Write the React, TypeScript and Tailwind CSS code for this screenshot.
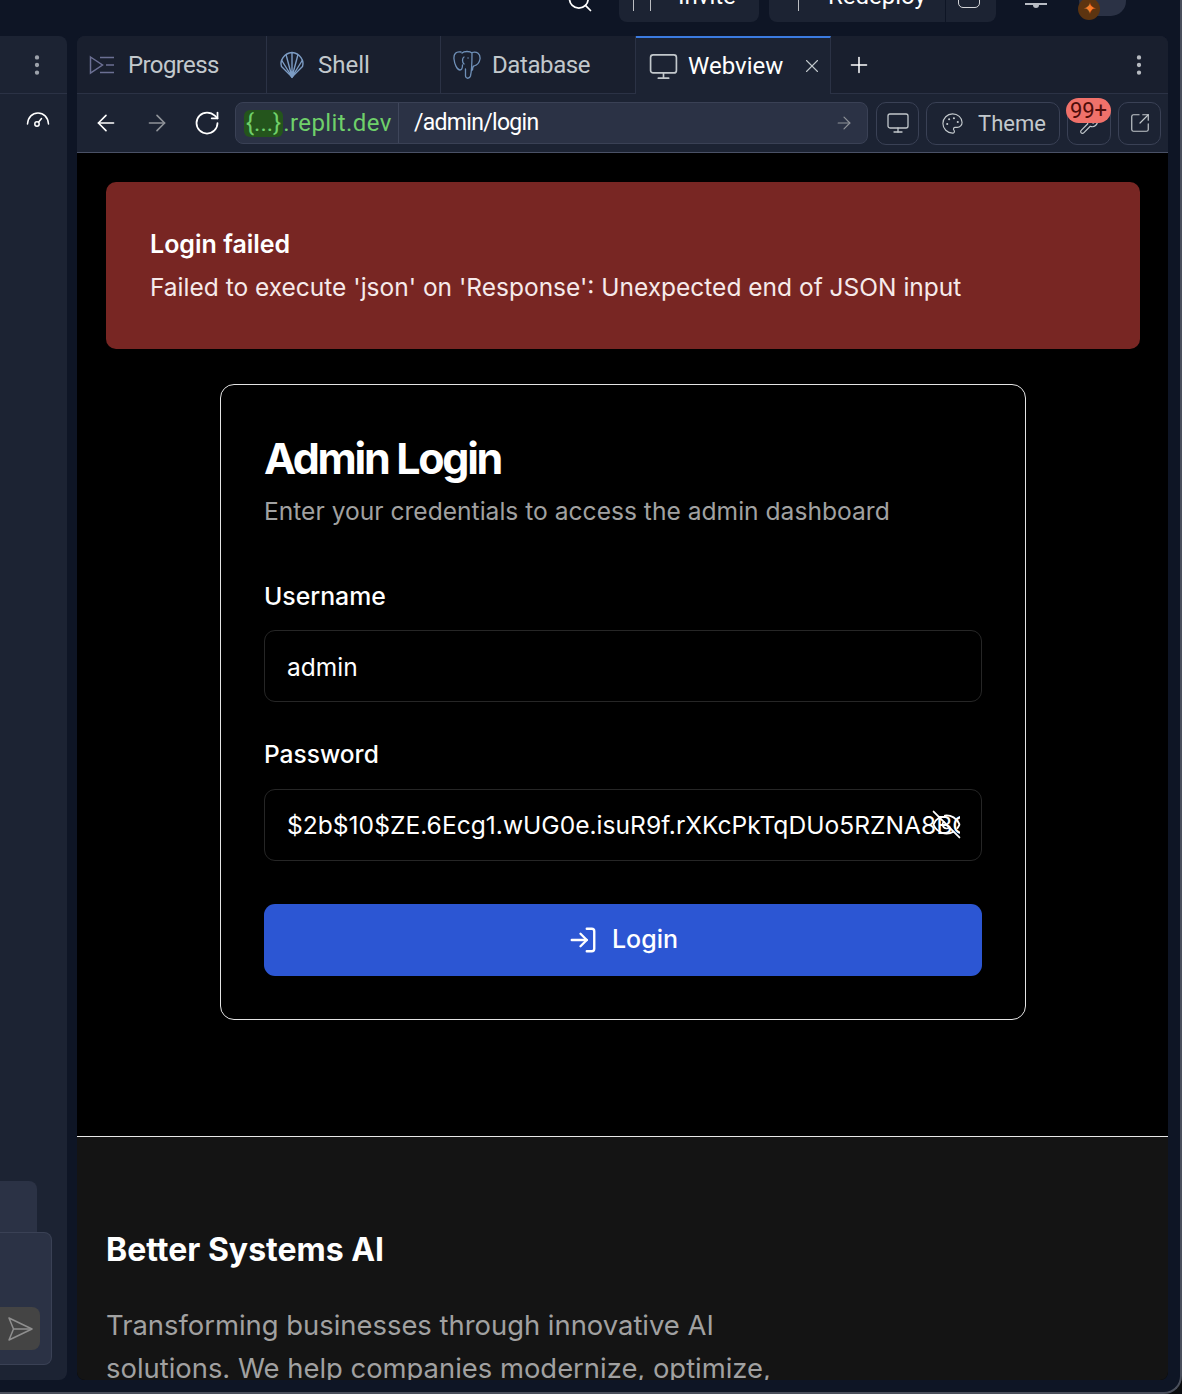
import { ArrowLeft, ArrowRight, EllipsisVertical, EyeOff, LogIn, Monitor, Palette, Plus, RotateCw, Search, SquareArrowOutUpRight, Wrench, X } from 'lucide-react'

const plex = "font-['Roboto','Noto_Sans',sans-serif]"
const inter = "font-['Inter',sans-serif]"

function ProgressIcon() {
  return (
    <svg width="26" height="20" viewBox="0 0 26 20" fill="none" stroke="#6b6f93" strokeWidth="1.5">
      <path d="M1.5 2 L13.5 10 L1.5 18 Z" />
      <path d="M11 2.5h14M17 10h8M11 17.5h14" />
    </svg>
  )
}

function ShellIcon() {
  return (
    <svg width="26" height="28" viewBox="0 0 26 28" fill="none" stroke="#7c9cc4" strokeWidth="1.4" strokeLinejoin="round">
      <path d="M13 26 L2.5 15.5 C0.5 10 5 2 13 1.5 C21 2 25.5 10 23.5 15.5 Z" />
      <path d="M13 26 L7 3.5M13 26 L2.5 9M13 26 V1.5M13 26 L19 3.5M13 26 L23.5 9" />
      <path d="M10.5 22 h5 L13 26.5 Z" fill="#7c9cc4" />
    </svg>
  )
}

function ElephantIcon() {
  return (
    <svg width="28" height="30" viewBox="0 0 28 30" fill="none" stroke="#6f90b8" strokeWidth="1.3" strokeLinecap="round" strokeLinejoin="round">
      <path d="M8 2 C3 1 0.5 4 1 9 C1.5 14 4 20 7 20 C9 20 9.5 17 9.5 15" />
      <path d="M9 3 C11 1 17 1 19 3 C19 8 19 20 17.5 26 C16.5 29 13 29 12.5 26 V19" />
      <path d="M19 2.5 C24 1 27.5 4 27 9 C26.5 12 24.5 15 21 16 C20 16.2 19.5 18 19.5 20" />
      <path d="M11 7 C9 8 9 12 11 14M15 8h.1" />
    </svg>
  )
}

function GaugeIcon() {
  return (
    <svg width="24" height="18" viewBox="0 0 24 18" fill="none" stroke="#fff" strokeWidth="1.5" strokeLinecap="round">
      <path d="M1.5 13 C2 6 6.5 2 12 2 C17.5 2 22 6 22.5 13" />
      <circle cx="11" cy="13" r="2.2" />
      <path d="M12.5 11.2 L15.5 7.5" />
    </svg>
  )
}

function SendIcon() {
  return (
    <svg width="26" height="26" viewBox="0 0 26 26" fill="none" stroke="#8f8f8f" strokeWidth="1.5" strokeLinejoin="round">
      <path d="M2 2 L25 13 L2 24 L6.5 13 Z" />
      <path d="M6.5 13 H25" />
    </svg>
  )
}

function Tab({ icon, label, width, gap, tracking }: { icon: React.ReactNode; label: string; width: string; gap: string; tracking: string }) {
  return (
    <div className={`${width} ${gap} h-full flex items-center pl-[12px] border-r border-[#2b3245] text-[#c2c8cc] text-[24px]`}>
      {icon}
      <span className={tracking}>{label}</span>
    </div>
  )
}

export default function App() {
  return (
    <div className="w-[1182px] h-[1394px] bg-[#0b0d10] overflow-hidden">
      <div className="w-full h-full bg-[#0e1525] flex flex-col border-r-2 border-b-2 border-[#4a4f5c] rounded-br-[18px] overflow-hidden">
        {/* top bar, mostly cut off by the crop */}
        <div className={`h-[36px] shrink-0 overflow-hidden flex items-start pl-[566px] ${plex}`}>
          <Search className="mt-[-14px] text-white" size={28} strokeWidth={1.5} />
          <div className="ml-[25px] mt-[-20px] w-[140px] h-[42px] bg-[#1c2333] rounded-[8px] flex items-end pl-[14px] text-white text-[24px] leading-[30px] pb-[11px]">
            <span className="w-[18px] h-[26px] border-x border-white/70" />
            <span className="ml-[27px]">Invite</span>
          </div>
          <div className="ml-[10px] mt-[-20px] w-[227px] h-[42px] bg-[#1c2333] rounded-[8px] flex items-end text-white text-[24px] leading-[30px] pb-[11px]">
            <span className="ml-[29px] w-px h-[26px] bg-white/70" />
            <span className="ml-[29px]">Redeploy</span>
            <span className="ml-[19px] w-px h-[42px] mb-[-11px] bg-[#0e1525]" />
            <span className="ml-[12px] w-[22px] h-[20px] border border-white/80 rounded-[5px] mb-[3px]" />
          </div>
          <div className="ml-[29px] mt-[-10px] w-[22px] h-[15px] border-b-[2px] border-[#b8bcc4] flex justify-center">
            <span className="mt-[15px] w-[6px] h-[3px] bg-[#b8bcc4] rounded-b-full" />
          </div>
          <div className="ml-[32px] mt-[-14px] w-[47px] h-[30px] bg-[#2b3245] rounded-full relative">
            <span className="absolute left-[-1px] top-[12px] w-[22px] h-[22px] rounded-full bg-[#5c3410] flex items-center justify-center text-[#f57b2a] text-[16px] leading-none">✦</span>
          </div>
        </div>

        <div className="flex-1 flex gap-[10px] pr-[12px] pb-[12px] min-h-0">
          {/* left panel */}
          <div className="w-[67px] bg-[#1c2333] rounded-r-[8px] flex flex-col">
            <div className="h-[58px] border-b border-[#2b3245] flex items-center justify-end pr-[17px]">
              <EllipsisVertical className="text-[#9da2ab]" size={26} />
            </div>
            <div className="pt-[17px] pl-[26px]">
              <GaugeIcon />
            </div>
            <div className="flex-1" />
            <div className="w-[37px] h-[51px] bg-[#2b3245] rounded-tr-[8px]" />
            <div className="w-[52px] h-[133px] bg-[#2b3245] border border-l-0 border-[#3a4155] rounded-r-[8px] rounded-tl-none mb-[15px] flex items-end pb-[14px]">
              <div className="w-[40px] h-[43px] bg-[#444444] rounded-r-[8px] flex items-center justify-center">
                <SendIcon />
              </div>
            </div>
          </div>

          {/* right panel */}
          <div className="flex-1 min-w-0 flex flex-col bg-[#1c2333] rounded-[8px] overflow-hidden">
            {/* tabs */}
            <div className={`h-[58px] shrink-0 flex items-stretch bg-[#191f2e] border-b border-[#2b3245] ${plex}`}>
              <Tab icon={<ProgressIcon />} label="Progress" width="w-[190px]" gap="gap-[13px]" tracking="tracking-[-0.6px]" />
              <Tab icon={<ShellIcon />} label="Shell" width="w-[174px]" gap="gap-[13px]" tracking="tracking-normal" />
              <Tab icon={<ElephantIcon />} label="Database" width="w-[195px]" gap="gap-[11px]" tracking="tracking-[-0.4px]" />
              <div className="w-[195px] mb-[-1px] bg-[#1c2333] border-t-2 border-[#3b7be0] border-r border-r-[#2b3245] flex items-center pl-[12px] text-white text-[24px]">
                <Monitor className="text-[#c2c8cc] shrink-0" size={31} strokeWidth={1.3} />
                <span className="ml-[9px]">Webview</span>
                <X className="ml-[18px] text-[#c2c8cc] shrink-0" size={22} strokeWidth={1.2} />
              </div>
              <div className="flex-1 flex items-center justify-between pl-[15px] pr-[16px]">
                <Plus className="text-white" size={26} strokeWidth={1.4} />
                <EllipsisVertical className="text-[#b6bac0]" size={26} />
              </div>
            </div>

            {/* url bar */}
            <div className={`h-[59px] shrink-0 flex items-center pl-[16px] border-b border-[#4a5166] ${plex}`}>
              <ArrowLeft className="text-white shrink-0" size={26} strokeWidth={1.5} />
              <ArrowRight className="ml-[25px] text-[#8f9399] shrink-0" size={26} strokeWidth={1.5} />
              <RotateCw className="ml-[23px] text-white shrink-0" size={28} strokeWidth={1.5} />
              <div className="ml-[14px] w-[633px] h-[42px] shrink-0 flex items-stretch bg-[#2b3245] border border-[#3a4155] rounded-[8px] text-[24px]">
                <div className="w-[163px] flex items-center pl-[8px] text-[#6fd06a] border-r border-[#3f465b]">
                  <span className="h-[27px] px-[2px] bg-[#24551c] rounded-[6px] flex items-center">{'{...}'}</span>
                  <span className="tracking-[0.4px]">.replit.dev</span>
                </div>
                <div className="flex-1 flex items-center justify-between pl-[15px] pr-[13px] text-white">
                  <span className="text-[23px] tracking-[-0.7px]">/admin/login</span>
                  <ArrowRight className="text-[#8f9399]" size={20} strokeWidth={1.4} />
                </div>
              </div>
              <div className="ml-[8px] w-[43px] h-[43px] shrink-0 border border-[#3a4155] rounded-[10px] flex items-center justify-center">
                <Monitor className="text-[#c2c8cc]" size={24} strokeWidth={1.3} />
              </div>
              <div className="ml-[7px] w-[134px] h-[43px] shrink-0 border border-[#3a4155] rounded-[10px] flex items-center pl-[14px] gap-[14px] text-[#c2c8cc] text-[22px]">
                <Palette size={23} strokeWidth={1.2} />
                <span>Theme</span>
              </div>
              <div className="ml-[7px] w-[44px] h-[43px] shrink-0 border border-[#3a4155] rounded-[10px] flex items-center justify-center relative">
                <Wrench className="text-[#c2c8cc] mt-[4px]" size={20} strokeWidth={1.4} />
                <span className="absolute left-[-2px] top-[-5px] w-[45px] h-[25px] rounded-full bg-[#f0716a] text-[#4f0d0a] text-[22px] leading-[25px] text-center">99+</span>
              </div>
              <div className="ml-[7px] w-[43px] h-[43px] shrink-0 border border-[#3a4155] rounded-[10px] flex items-center justify-center">
                <SquareArrowOutUpRight className="text-[#c2c8cc]" size={22} strokeWidth={1.3} />
              </div>
            </div>

            {/* webview */}
            <div className={`flex-1 min-h-0 overflow-hidden bg-black text-white ${inter}`}>
              <div className="h-[984px] px-[29px] pt-[29px] border-b border-[#e8e8e8]">
                <div className="w-[1034px] h-[167px] bg-[#782623] rounded-[10px] px-[44px] pt-[42px]">
                  <div className="text-[25px] leading-[40px] font-semibold">Login failed</div>
                  <div className="mt-[1px] text-[24.5px] leading-[44px] text-[#f6eaea]">Failed to execute 'json' on 'Response': Unexpected end of JSON input</div>
                </div>
                <div className="ml-[114px] mt-[35px] w-[806px] h-[636px] border border-[#e4e4e4] rounded-[14px] px-[43px] pt-[43px]">
                  <h1 className="text-[43px] leading-[60px] font-bold tracking-[-2.3px]">Admin Login</h1>
                  <p className="mt-[1px] text-[24.6px] leading-[44px] text-[#a1a1a1]">Enter your credentials to access the admin dashboard</p>
                  <label className="block mt-[41px] text-[24.8px] leading-[44px] font-medium">Username</label>
                  <input readOnly value="admin" className="block mt-[12px] w-full h-[72px] px-[22px] pt-[2px] bg-black border border-[#262626] rounded-[11px] text-[24.5px] outline-none" />
                  <label className="block mt-[30px] text-[24.5px] leading-[44px] font-medium">Password</label>
                  <div className="relative mt-[13px]">
                    <input readOnly value="$2b$10$ZE.6Ecg1.wUG0e.isuR9f.rXKcPkTqDUo5RZNA8BQxYz" className="block w-full h-[72px] pl-[22px] pr-[21px] bg-black border border-[#262626] rounded-[11px] text-[24.6px] outline-none" />
                    <EyeOff className="absolute right-[20px] top-[20px] text-white" size={31} strokeWidth={1.4} />
                  </div>
                  <button className="mt-[43px] w-full h-[72px] bg-[#2c56d3] rounded-[11px] flex items-center justify-center gap-[14px] text-[25px] font-medium">
                    <LogIn size={30} strokeWidth={1.9} />
                    <span>Login</span>
                  </button>
                </div>
              </div>
              <div className="h-[400px] bg-[#141414] px-[29px] pt-[91px]">
                <h2 className="text-[32px] leading-[44px] font-bold">Better Systems AI</h2>
                <p className="mt-[32px] w-[700px] text-[27.4px] leading-[43px] text-[#a1a1a1]">Transforming businesses through innovative AI solutions. We help companies modernize, optimize, and automate their operations.</p>
              </div>
            </div>
          </div>
        </div>
      </div>
    </div>
  )
}
